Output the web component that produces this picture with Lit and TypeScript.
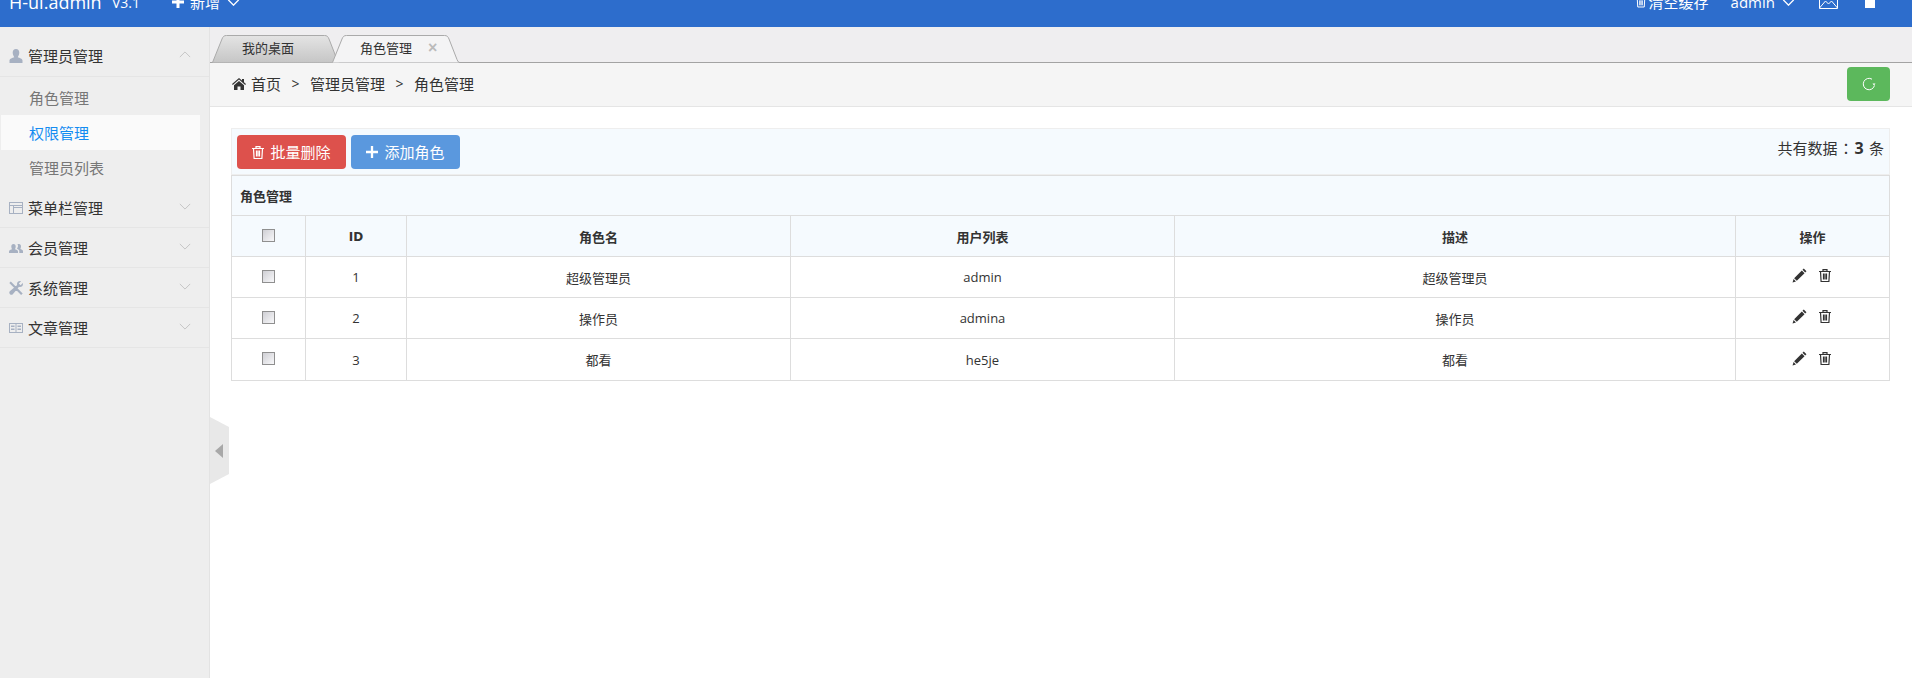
import { LitElement, html, css, svg } from "lit";
import { customElement } from "lit/decorators.js";

const chev = html`<svg class="chev" viewBox="0 0 14 8"><path d="M1 1l6 6 6-6" fill="none" stroke="currentColor" stroke-width="1"/></svg>`;
const trash = (c = "currentColor") => html`<svg class="trash" viewBox="0 0 12 13"><path fill="none" stroke="${c}" stroke-width="1.200" d="M0 2.500h12M4 2.500V.7h4v1.800M1.500 2.500l.6 10h7.800l.6-10M4.500 4.500v6M6 4.500v6M7.500 4.500v6"/></svg>`;
const pencil = html`<svg class="pencil" viewBox="0 0 14 14"><path fill="#333" d="M11 .5l2.500 2.500-1.200 1.200-2.500-2.500zM9.200 2.300l2.500 2.500-7.200 7.200L2 9.500zM1.500 10.300l2.200 2.200-3.200 1z"/></svg>`;
const icons: Record<string, unknown> = {
  user: svg`<path d="M7 0c2.200 0 3.300 1.700 3.300 3.800S9 7.500 8.800 8.200c1.500.7 4.700 1.400 4.700 3.300V14H.5v-2.500c0-1.900 3.200-2.600 4.700-3.300C5 7.500 3.700 5.900 3.700 3.800S4.800 0 7 0z"/>`,
  menu: svg`<path fill-rule="evenodd" d="M0 1h14v12H0zm1 1v2h12V2zm0 3v7h3V5zm4 0v1h8V5zm0 2v5h8V7z"/>`,
  group: svg`<path d="M4.500 3c1.500 0 2.200 1 2.200 2.500S6 8 6 8.300c1 .5 3 .8 3 2.200V12H0v-1.500c0-1.400 2-1.700 3-2.200C3 8 2.300 7 2.300 5.500S3 3 4.500 3zm5.500 0c1.300 0 2 1 2 2.300s-.6 2.400-.7 2.800c.9.400 2.700.7 2.700 2V12h-3.700v-2c0-1-1-1.700-2.300-2.300.5-1 1-1.500 1-2.600 0-.9-.2-1.500-.5-1.900.2-.1.300-.2.500-.2z"/>`,
  tool: svg`<path d="M1.800 .5L7 5.700 5.500 7.300.3 2zM11 0c.4 0 .8.100 1 .2L9.800 2.400l1.800 1.800L13.800 2c.1.300.2.700.2 1 0 1.700-1.300 3-3 3-.4 0-.7-.1-1-.2L3.800 13.200C3 14 1.800 14 1 13.200S0 11 .8 10.200L8.200 4c-.1-.3-.2-.6-.2-1 0-1.700 1.300-3 3-3zM8.500 7.200l5.200 5.200-1.600 1.600-5.200-5.200z"/>`,
  book: svg`<path fill-rule="evenodd" d="M0 2h14v10H0zm1 1v8h5.500V3zm6.500 0v8H13V3zM2 4.500h3.500v1.500H2zM8.500 4.500H12v1.500H8.500zM2 7.500h3.500V9H2zM8.500 7.500H12V9H8.500z"/>`,
};

@customElement("app-root")
export class AppRoot extends LitElement {
  static styles = css`
    :host { display: block; height: 678px; overflow: hidden; position: relative; font-family: "Noto Sans CJK SC", "Open Sans", sans-serif; color: #333; background: #fff; }
    svg { display: block; flex: none; }
    .chev { width: 13px; height: 7px; }
    .top { height: 27px; background: #2d6dcc; overflow: hidden; color: #fff; }
    .top-in { margin-top: -20px; height: 44px; display: flex; align-items: center; font-size: 15px; line-height: 44px; }
    .top .chev path { stroke-width: 1.6; }
    .logo { margin-left: 9px; font-size: 18px; font-family: "Open Sans", sans-serif; width: 103px; }
    .ver { font-size: 14px; font-family: "Open Sans", sans-serif; width: 60px; position: relative; top: 1px; }
    .add { display: flex; align-items: center; gap: 6px; }
    .plus { width: 12px; height: 12px; }
    .add .chev { margin-left: 1px; }
    .spacer { flex: 1; }
    .top .trash { width: 10px; height: 12px; margin-right: 3px; }
    .user { font-family: "Open Sans", sans-serif; margin-left: 22px; margin-right: 7px; }
    .mail { width: 19px; height: 14px; margin-left: 24px; }
    .sq { width: 10px; height: 10px; background: #fff; margin: 0 37px 0 27px; position: relative; top: 1px; }
    .body { display: flex; height: 651px; }
    aside { width: 209px; background: #eee; border-right: 1px solid #e3e3e3; padding-top: 9px; flex: none; }
    .m { height: 40px; box-sizing: border-box; border-bottom: 1px solid #e5e5e5; display: flex; align-items: center; font-size: 15px; padding: 0 18px 0 9px; gap: 5px; }
    .m:first-child { height: 41px; }
    .m .ic { width: 14px; height: 14px; fill: #a7b1c2; }
    .m .txt { flex: 1; line-height: 38px; }
    .m .chev { color: #bdbdbd; width: 12px; height: 7px; margin-top: -3px; }
    .subs { padding: 3px 0; }
    .s { height: 35px; line-height: 35px; font-size: 15px; color: #777; margin-right: 9px; margin-left: 1px; padding-left: 28px; }
    .s.on { background: #fafafa; color: #148cf1; }
    main { flex: 1; min-width: 0; display: flex; flex-direction: column; }
    .tabs { height: 36px; box-sizing: border-box; background: #efeef0; border-bottom: 1px solid #a3a3a3; padding: 8px 0 0 2px; display: flex; }
    .tab { position: relative; width: 128px; height: 28px; flex: none; font-size: 13px; line-height: 26px; color: #333; box-sizing: border-box; padding-left: 30px; }
    .tab + .tab { margin-left: -8px; padding-left: 28px; }
    .tab svg { position: absolute; inset: 0; }
    .tab span { position: relative; }
    .tab .x { position: absolute; left: 96px; top: 0; color: #bbb; font-size: 16px; font-weight: bold; font-family: "Liberation Sans", sans-serif; }
    .crumb { height: 44px; box-sizing: border-box; background: #f5f5f5; border-bottom: 1px solid #e5e5e5; display: flex; align-items: center; font-size: 15px; padding: 0 22px; }
    .crumb > span:not(.refresh):not(.spacer) { position: relative; top: -1px; }
    .home { width: 14px; height: 12px; margin: -2px 5px 0 0; }
    .sep { margin: 0 10.500px; color: #333; font-family: "Open Sans", sans-serif; font-size: 14px; }
    .refresh { width: 43px; height: 34px; background: #5cb85c; border-radius: 4px; display: flex; align-items: center; justify-content: center; margin-top: -2px; }
    .refresh svg { width: 14px; height: 14px; }
    .page { padding: 21px 22px 0 21px; }
    .bar { height: 47px; box-sizing: border-box; background: #f5fafe; border: 1px solid #eee; display: flex; padding: 6px 5px 0 5px; gap: 5px; font-size: 15px; }
    .btn { width: 109px; height: 34px; border-radius: 4px; color: #fff; display: flex; align-items: center; justify-content: center; gap: 6px; line-height: 34px; }
    .btn.r { background: #dd514c; }
    .btn.b { background: #5a98de; }
    .btn svg { width: 12px; height: 13px; }
    .btn.b svg { width: 12px; height: 12px; }
    .count { margin-left: auto; font-size: 15px; line-height: 26px; color: #333; }
    .count i { font-style: normal; font-family: "Noto Sans CJK TC", sans-serif; margin-left: 1px; }
    .count b { font-family: "Open Sans", sans-serif; font-size: 16px; margin: 0 2px 0 1px; }
    table { width: 1658px; border-collapse: collapse; table-layout: fixed; font-size: 13px; }
    td, th { border: 1px solid #ddd; text-align: center; padding: 0; }
    .cap th { height: 39px; text-align: left; padding-left: 8px; background: #f5fafe; font-size: 13px; }
    .hd th { height: 40px; background: #f5fafe; }
    .hd th.latin { font-family: "DejaVu Sans", sans-serif; font-size: 12px; }
    .hd th.latin span { position: relative; top: 1px; }
    td { height: 40px; }
    tr:last-child td { height: 41px; }
    td.latin { font-family: "Open Sans", sans-serif; font-size: 13px; }
    .cb { display: block; margin: -2px auto 0; width: 13px; height: 13px; box-sizing: border-box; border: 1px solid #8f8f8f; background: linear-gradient(135deg, #cfcfd4, #f8f8fa); appearance: none; }
    .ops { display: flex; justify-content: center; align-items: center; gap: 12px; margin-top: -3px; padding-right: 2px; }
    .pencil { width: 15px; height: 15px; }
    .ops .trash { width: 12px; height: 13px; }
    .toggle { position: absolute; left: 210px; top: 417px; width: 19px; height: 67px; background: #e8e8e8; clip-path: polygon(0 0, 100% 15%, 100% 85%, 0 100%); display: flex; align-items: center; justify-content: center; }
    .toggle i { width: 0; height: 0; border-top: 7.500px solid transparent; border-bottom: 7.500px solid transparent; border-right: 8px solid #a8a8a8; margin-right: 1px; }
  `;

  tabPath(fill: string) {
    return svg`<path d="M.5 27.500L10 4C11 1.500 12 .5 14.500 .5H112.500C115 .5 116 1.500 117 4L125 24.500C126 27 127 27.500 128 27.500" fill="${fill}" stroke="#aaa" stroke-width="1"/>`;
  }

  row(id: number, name: string, user: string) {
    return html`<tr>
      <td><input class="cb" type="checkbox" /></td>
      <td class="latin">${id}</td>
      <td>${name}</td>
      <td class="latin">${user}</td>
      <td>${name}</td>
      <td><div class="ops">${pencil}${trash("#333")}</div></td>
    </tr>`;
  }

  item(ic: string, label: string, open = false) {
    return html`<div class="m">
      <svg class="ic" viewBox="0 0 14 14">${icons[ic]}</svg>
      <span class="txt">${label}</span>
      ${open ? html`<svg class="chev" viewBox="0 0 14 8"><path d="M1 7l6-6 6 6" fill="none" stroke="currentColor"/></svg>` : chev}
    </div>`;
  }

  render() {
    return html`
      <div class="top"><div class="top-in">
        <span class="logo">H-ui.admin</span><span class="ver">V3.1</span>
        <span class="add"><svg class="plus" viewBox="0 0 12 12"><path fill="#fff" d="M4.500 0h3v4.500H12v3H7.500V12h-3V7.500H0v-3h4.500z"/></svg>新增${chev}</span>
        <span class="spacer"></span>
        ${trash()}<span>清空缓存</span>
        <span class="user">admin</span>${chev}
        <svg class="mail" viewBox="0 0 19 14"><path d="M.5.500h18v13H.5zM.5 13l6-7 3 3 3-3 6 7" fill="none" stroke="#fff"/></svg>
        <span class="sq"></span>
      </div></div>
      <div class="body">
        <aside>
          ${this.item("user", "管理员管理", true)}
          <div class="subs">
            <div class="s">角色管理</div>
            <div class="s on">权限管理</div>
            <div class="s">管理员列表</div>
          </div>
          ${this.item("menu", "菜单栏管理")}
          ${this.item("group", "会员管理")}
          ${this.item("tool", "系统管理")}
          ${this.item("book", "文章管理")}
        </aside>
        <main>
          <div class="tabs">
            <div class="tab">
              <svg width="128" height="28" viewBox="0 0 128 28">
                <defs><linearGradient id="g" x1="0" y1="0" x2="0" y2="1"><stop offset="0" stop-color="#e4e4e4"/><stop offset="1" stop-color="#c6c6c6"/></linearGradient></defs>
                ${this.tabPath("url(#g)")}
              </svg>
              <span>我的桌面</span>
            </div>
            <div class="tab">
              <svg width="128" height="28" viewBox="0 0 128 28">${this.tabPath("#f4f4f5")}</svg>
              <span>角色管理</span><span class="x">×</span>
            </div>
          </div>
          <div class="crumb">
            <svg class="home" viewBox="0 0 14 12"><path fill="#333" d="M7 0l3 2.600V1h2v3.300L14 6l-.8.900L7 1.600.8 6.900 0 6zM7 3l5 4.300V12H8.500V8.500h-3V12H2V7.300z"/></svg>
            <span>首页</span><span class="sep">&gt;</span><span>管理员管理</span><span class="sep">&gt;</span><span>角色管理</span>
            <span class="spacer"></span>
            <span class="refresh"><svg viewBox="0 0 14 14"><path d="M12.500 8.500A5.700 5.700 0 1 1 10 2.200" fill="none" stroke="#fff" stroke-width="1"/><path fill="#fff" d="M10.500 6.500l3 0-1.500 2z"/></svg></span>
          </div>
          <div class="page">
            <div class="bar">
              <span class="btn r">${trash("#fff")}批量删除</span>
              <span class="btn b"><svg viewBox="0 0 13 13"><path fill="#fff" d="M5.250 0h2.500v5.250H13v2.500H7.750V13h-2.500V7.750H0v-2.500h5.250z"/></svg>添加角色</span>
              <span class="count">共有数据<i>：</i><b>3</b> 条</span>
            </div>
            <table>
              <colgroup><col style="width:74px"/><col style="width:101px"/><col style="width:384px"/><col style="width:384px"/><col style="width:561px"/><col style="width:154px"/></colgroup>
              <thead>
                <tr class="cap"><th colspan="6">角色管理</th></tr>
                <tr class="hd"><th><input class="cb" type="checkbox" /></th><th class="latin"><span>ID</span></th><th>角色名</th><th>用户列表</th><th>描述</th><th>操作</th></tr>
              </thead>
              <tbody>
                ${this.row(1, "超级管理员", "admin")}
                ${this.row(2, "操作员", "admina")}
                ${this.row(3, "都看", "he5je")}
              </tbody>
            </table>
          </div>
        </main>
      </div>
      <div class="toggle"><i></i></div>
    `;
  }
}
